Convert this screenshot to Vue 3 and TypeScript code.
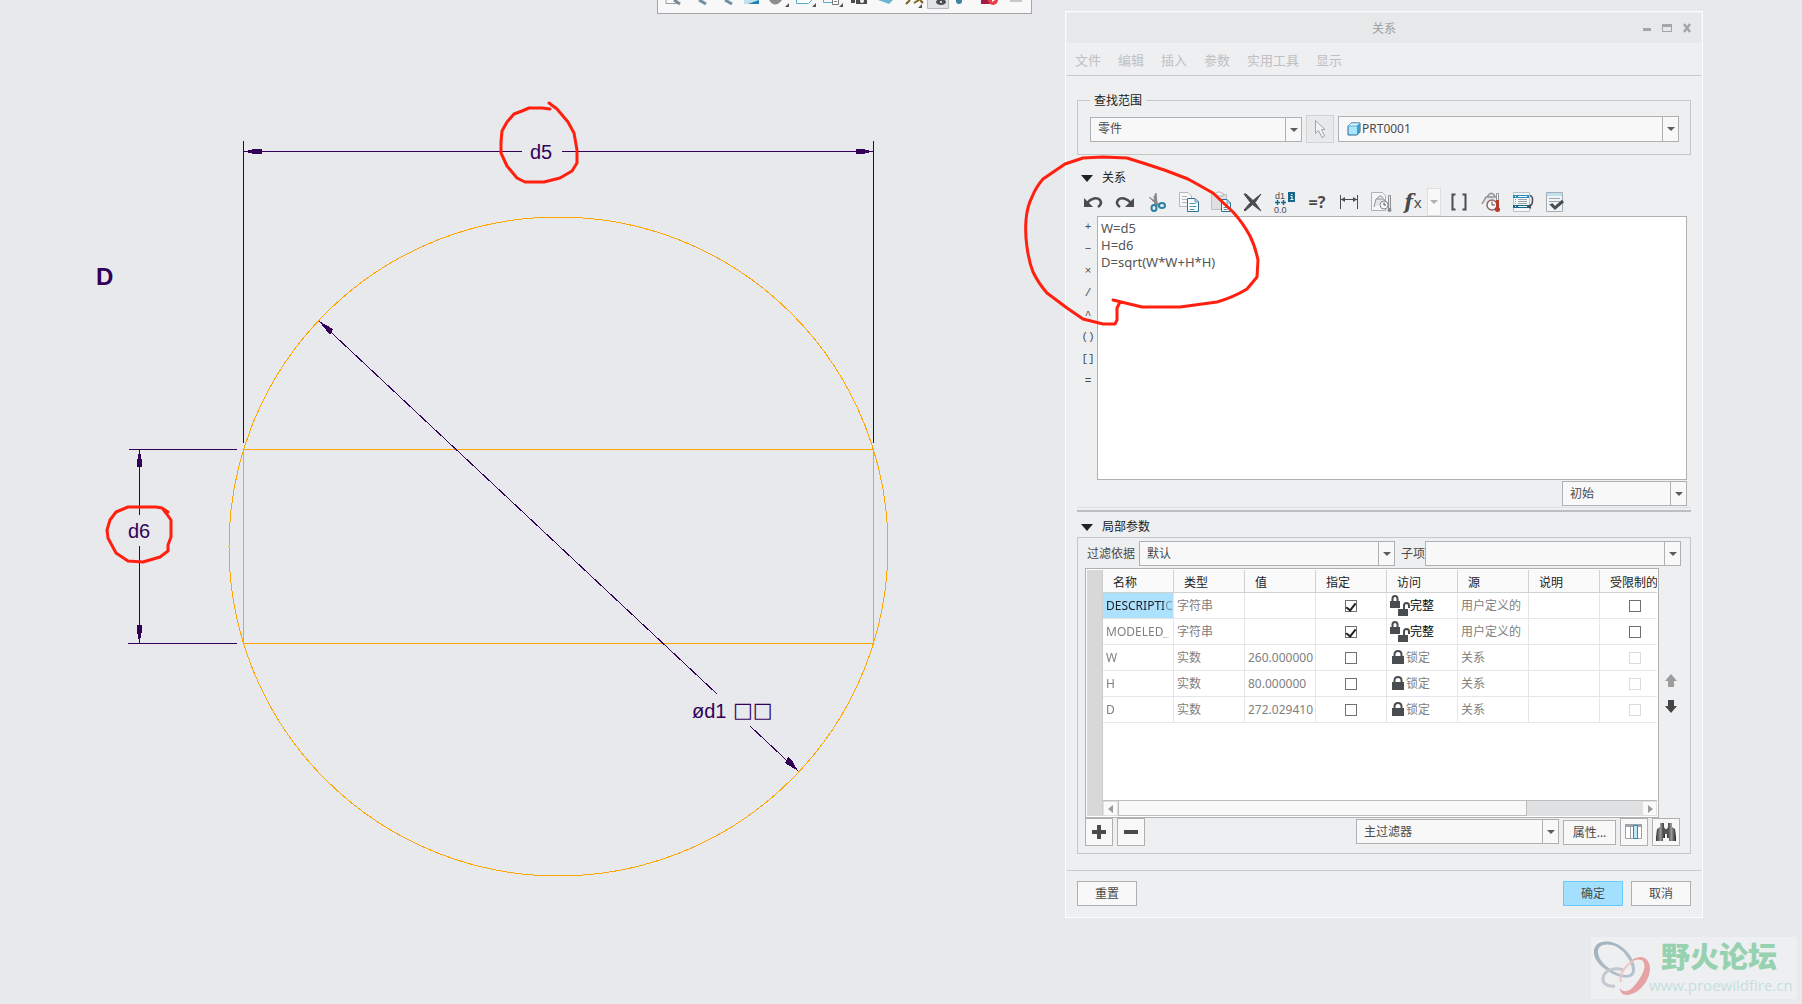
<script setup lang="ts">
import { reactive, ref } from 'vue'

interface Param {
  name: string
  type: string
  value: string
  designated: boolean
  full: boolean
  source: string
}

const menus = ['文件', '编辑', '插入', '参数', '实用工具', '显示']
const operators = ['+', '−', '×', '/', '^', '()', '[]', '=']
const headers = ['名称', '类型', '值', '指定', '访问', '源', '说明', '受限制的']

const relations = ref('W=d5\nH=d6\nD=sqrt(W*W+H*H)')

const params = reactive<Param[]>([
  { name: 'DESCRIPTIO', type: '字符串', value: '', designated: true, full: true, source: '用户定义的' },
  { name: 'MODELED_', type: '字符串', value: '', designated: true, full: true, source: '用户定义的' },
  { name: 'W', type: '实数', value: '260.000000', designated: false, full: false, source: '关系' },
  { name: 'H', type: '实数', value: '80.000000', designated: false, full: false, source: '关系' },
  { name: 'D', type: '实数', value: '272.029410', designated: false, full: false, source: '关系' },
])
const selected = ref(0)
</script>

<template>
  <main class="desktop">
    <!-- Sketch with its dimensions -->
    <svg class="sketch" role="img" aria-label="草绘">
      <g class="geometry" shape-rendering="crispEdges">
        <circle cx="558.5" cy="546.5" r="329.5" />
        <rect x="243.5" y="449.5" width="630" height="194" />
      </g>
      <g class="dimension" shape-rendering="crispEdges">
        <path d="M243.5 141V443M873.5 141V443M244 151.5H522M562 151.5H873" />
        <path d="M129 449.5H237M128 643.5H237M139.5 450V515M139.5 546V643" />
        <path d="M319 321L717 694M750 726L798 771" />
      </g>
      <g class="arrowhead" shape-rendering="crispEdges">
        <path d="M246 151L254 149H262V154H254L246 152z" />
        <path d="M871 151L863 149H856V154H863L871 152z" />
        <path d="M139 452L137 461V467H142V461L140 452z" />
        <path d="M139 641L137 631V625H142V631L140 641z" />
        <path d="M319 321L333 329L330 335L326 330z" />
        <path d="M798 771L785 763L788 757L793 762z" />
      </g>
      <text x="96" y="285" class="label-bold">D</text>
      <text x="530" y="159" class="label">d5</text>
      <text x="128" y="538" class="label">d6</text>
      <text x="692" y="718" class="label">ød1</text>
      <text x="733" y="717" class="boxes">□□</text>
    </svg>

    <!-- Graphics toolbar, docked at the upper edge -->
    <div class="graphics-bar">
      <svg width="374" height="13" aria-hidden="true">
        <g fill="none" stroke="#9a9fa3">
          <path d="M8 0V3.500H20" /><path d="M16 0l6 4" stroke-width="3" stroke="#7c8b96" />
          <path d="M41 0l7 4" stroke-width="3" stroke="#6f8fa3" />
          <path d="M67 0l7 4" stroke-width="3" stroke="#6f8fa3" />
        </g>
        <path d="M86 0H101V4H86z" fill="#bfe0ee" /><path d="M90 4L101 0V4z" fill="#1f7fae" />
        <path d="M111 0Q117 9 124 0z" fill="#8b8e90" />
        <path d="M138.500 0V3.500H150.500L154 0" fill="#fff" stroke="#58acd0" />
        <path d="M165.500 0V2.500H174" fill="none" stroke="#58acd0" /><path d="M174.500 0V4.500H180.500V0M176 1.500H179" fill="#fff" stroke="#777" />
        <path d="M193 0h4v3h-4zM198 0H209V4H198z" fill="#4a4d50" /><circle cx="204" cy="1" r="2" fill="#eee" />
        <path d="M220 0L231 4L235 0z" fill="#6fb4cf" />
        <path d="M248 4l4-4M256 3l5-3M262 0l3 3" stroke="#80601c" stroke-width="2" fill="none" />
        <path d="M269.500 0V8.500H290.500V0" fill="#e1e3e5" stroke="#b7babd" />
        <ellipse cx="283" cy="2" rx="5" ry="3" fill="#4a4d50" /><circle cx="283" cy="2" r="1" fill="#fff" />
        <circle cx="301" cy="1" r="3" fill="#3c83a6" />
        <path d="M323 0h9v4h-9z" fill="#a51c4b" /><circle cx="335" cy="0" r="5" fill="#e9404a" /><path d="M334 0v2l3-2z" fill="#fff" />
        <path d="M352 1h12" stroke="#c8c8c8" stroke-width="2" />
        <path d="M131 3v4h-4zM158 3v4h-4zM185 3v4h-4zM264 4v4h-4z" fill="#555" />
      </svg>
    </div>

    <section class="dialog" role="dialog" aria-label="关系">
      <header class="titlebar">
        <h1>关系</h1>
        <div class="window-buttons">
          <button aria-label="最小化"><svg width="10" height="10"><path d="M1 5h8v3H1z" fill="#a3a5a6" /></svg></button>
          <button aria-label="最大化"><svg width="10" height="10"><path d="M0 1h10v8H0zM1 4v4h8V4z" fill="#a3a5a6" fill-rule="evenodd" /></svg></button>
          <button aria-label="关闭"><svg width="10" height="10"><path d="M2 1l6 8M8 1L2 9" stroke="#a3a5a6" stroke-width="2.500" /></svg></button>
        </div>
      </header>

      <nav class="menubar">
        <button v-for="m in menus" :key="m">{{ m }}</button>
      </nav>

      <div class="content">
        <fieldset class="scope">
          <legend>查找范围</legend>
          <div class="scope-row">
            <div class="combo scope-kind">
              <select aria-label="对象类型"><option>零件</option></select>
            </div>
            <button class="pick" aria-label="选择">
              <svg width="12" height="20" fill="#f2f3f4" stroke="#a3a5a7"><path d="M1.500 1.500V14.500L4.500 11.500L8 18.500L10.500 17L7.500 10.500H11z" /></svg>
            </button>
            <div class="combo tall scope-object">
              <svg class="cube" width="14" height="14">
                <path d="M1 4L4 1H13V10L10 13H1z" fill="#a8e6fb" stroke="#286a92" />
                <path d="M10 4L13 1V10L10 13z" fill="#3d9fd0" /><path d="M1 4L4 1H13L10 4z" fill="#e2f7ff" stroke="#5ea8cc" />
              </svg>
              <select aria-label="对象"><option>PRT0001</option></select>
            </div>
          </div>
        </fieldset>

        <h2 class="section-title relation-title"><span class="triangle"></span>关系</h2>

        <div class="toolbar" role="toolbar">
          <button aria-label="撤消"><svg viewBox="0 0 24 24"><path d="M3 8v9h9z" fill="#4a4d50" /><path d="M6 13C10 8 16 7 19 10C21 13 20 15 17 17" class="ink" stroke-width="2.500" /></svg></button>
          <button aria-label="重做"><svg viewBox="0 0 24 24"><path d="M21 8v9h-9z" fill="#4a4d50" /><path d="M18 13C14 8 8 7 5 10C3 13 4 15 7 17" class="ink" stroke-width="2.500" /></svg></button>
          <button aria-label="剪切"><svg viewBox="0 0 24 24"><path d="M4 7L15 15L13 16zM11 3L12 13L10 15L9 7z" fill="#85898c" stroke="#85898c" /><ellipse cx="9" cy="18" rx="2.500" ry="3" class="teal" stroke-width="2" /><ellipse cx="17" cy="15.500" rx="3" ry="2.500" class="teal" stroke-width="2" /></svg></button>
          <button aria-label="复制"><svg viewBox="0 0 24 24"><path d="M2.500 2.500H11L14.500 6V16.500H2.500z" fill="#f7f7f7" stroke="#b5b8ba" /><path d="M5 6.500h5M5 9.500h6M5 12.500h5" stroke="#b5b8ba" /><path d="M10.500 8.500H18L21.500 12V21.500H10.500z" fill="#fff" stroke="#2b6f93" /><path d="M18 8.500V12H21.500M12.500 13.500h6M12.500 16.500h7M12.500 19.500h5" fill="none" stroke="#4d91b3" /></svg></button>
          <button aria-label="粘贴"><svg viewBox="0 0 24 24"><path d="M2.500 4.500H17.500V19.500H2.500z" fill="#dedfe0" stroke="#bfc1c3" /><path d="M6 6V3.500L9 2H11L14 3.500V6z" fill="#f4f4f4" stroke="#b3b5b7" /><path d="M12.500 9.500H18L21.500 13V21.500H12.500z" fill="#fff" stroke="#2b6f93" /><path d="M18 9.500V13H21.500M14.500 14.500h4M14.500 17.500h5M14.500 19.500h4" fill="none" stroke="#4d91b3" /></svg></button>
          <button aria-label="删除"><svg viewBox="0 0 24 24"><path d="M3 4L5 4L12 10.500L20 4L14 12.500L20 21L11.500 14.500L4 21L3 20L9.500 12.500z" fill="#4a4d50" stroke="#4a4d50" /></svg></button>
          <button aria-label="切换尺寸"><svg viewBox="0 0 24 24"><text x="2" y="9" class="tiny">d1</text><text x="1" y="23" class="tiny">0.0</text><path d="M2 12.500H7M4.500 10V15M8 12.500h5M10.500 10V15" stroke="#16678c" stroke-width="1.500" /><rect x="15" y="2" width="7" height="10" fill="#16678c" /><path d="M18 4h1.500v1H18zM17.500 6h2v3h1v1h-3V9h1V7h-1z" fill="#fff" /></svg></button>
          <button class="glyph eval" aria-label="计算">=?</button>
          <button aria-label="显示尺寸"><svg viewBox="0 0 24 24"><path d="M3.500 5V19M20.500 5V19M4 9.500H20" class="ink" /><path d="M4 9.500L8 7V12zM20 9.500L16 7V12z" fill="#4a4d50" /></svg></button>
          <button aria-label="单位"><svg viewBox="0 0 24 24"><path d="M2.500 2.500H13.500L16.500 5.500V20.500H2.500z" fill="#f6f6f6" stroke="#aeb1b3" /><path d="M5 17L7 9H15L16 13M8 9Q11 3 14 8" fill="#e4e5e6" stroke="#909396" /><circle cx="15" cy="15" r="4" fill="#fafafa" stroke="#85898c" /><path d="M15 12.500V15H17" class="ink" stroke="#777" /><path d="M19.500 5.500h2V19h-2z" fill="#e4e5e6" stroke="#909396" /><circle cx="20.500" cy="20" r="2" fill="#85898c" /></svg></button>
          <button class="glyph fx" aria-label="函数"><i>f</i>x</button>
          <button class="fx-drop" aria-label="函数列表"></button>
          <button class="glyph" aria-label="括号"><svg viewBox="0 0 24 24"><path d="M8.500 4.500H5.500V19.500H8.500M15.500 4.500H18.500V19.500H15.500" class="ink" stroke-width="2" /></svg></button>
          <button aria-label="检查单位"><svg viewBox="-2 0 24 24"><path d="M1 14L5 7H17M6 7Q10 0 14 6" fill="#e4e5e6" stroke="#909396" stroke-width="1.500" /><circle cx="11" cy="15" r="5" fill="#fafafa" stroke="#8a6a60" stroke-width="1.500" /><path d="M11 11.500V15H14" class="ink" /><path d="M15.500 3.500h2V19h-2z" fill="#fff" stroke="#909396" /><path d="M15 10h3v9h-3z" fill="#b83a2c" /><circle cx="16.500" cy="19.500" r="2.500" fill="#b83a2c" /></svg></button>
          <button aria-label="排序"><svg viewBox="-1 0 24 24"><path d="M1.500 2.500H17.500V21.500H1.500z" fill="#f2f7fa" stroke="#b5c2ca" /><path d="M1 5h16v3H1z" fill="#2a8cbb" /><path d="M1 15h16v3H1z" fill="#16678c" /><path d="M3 6.500h1M6 6.500h9M3 16.500h1M6 16.500h9" stroke="#fff" /><path d="M3 9.500h1M6 9.500h9M3 11.500h1M6 11.500h9M3 13.500h1M6 13.500h9" stroke="#9aa3a8" /><path d="M18 5.500Q21 6 20.500 11Q20.500 15 17 16.500" class="ink" stroke-width="1.500" /><path d="M15 16.500l4-2.500v5z" fill="#4a4d50" /></svg></button>
          <button aria-label="校验"><svg viewBox="-1 0 24 24"><path d="M2.500 2.500H18.500V21.500H2.500z" fill="#eef4f8" stroke="#a3adb3" /><path d="M3 3h15v3H3z" fill="#c4dff0" /><path d="M5 8.500h11M5 11.500h11M5 14.500h5" stroke="#a0a5a8" /><path d="M7 14L11 18L19 11" class="ink" stroke-width="3" /></svg></button>
        </div>

        <div class="editor">
          <div class="operators">
            <button v-for="o in operators" :key="o">{{ o }}</button>
          </div>
          <textarea v-model="relations" aria-label="关系" spellcheck="false"></textarea>
        </div>
        <div class="state-row">
          <div class="combo state">
            <select aria-label="计算时机"><option>初始</option></select>
          </div>
        </div>

        <div class="splitter"></div>

        <h2 class="section-title param-title"><span class="triangle"></span>局部参数</h2>

        <div class="param-panel">
          <div class="filter-row">
            <label for="filter-by">过滤依据</label>
            <div class="combo filter-combo"><select id="filter-by"><option>默认</option></select></div>
            <label for="sub-item" class="sub-label">子项</label>
            <div class="combo filter-combo"><select id="sub-item"><option></option></select></div>
          </div>

          <div class="table-row">
            <div class="table-box">
              <div class="gutter"></div>
              <div class="table-main">
                <div class="table-clip">
                  <table>
                    <thead>
                      <tr><th v-for="h in headers" :key="h" scope="col">{{ h }}</th></tr>
                    </thead>
                    <tbody>
                      <tr v-for="(p, i) in params" :key="p.name">
                        <td :class="{ selected: i === selected }" @click="selected = i"><span class="clip">{{ p.name }}</span></td>
                        <td>{{ p.type }}</td>
                        <td>{{ p.value }}</td>
                        <td class="check"><input v-model="p.designated" type="checkbox" :aria-label="`指定 ${p.name}`" /></td>
                        <td class="access" :class="{ full: p.full }">
                          <span class="access-inner">
                            <svg v-if="p.full" width="20" height="22">
                              <path d="M0 6h10v7H0z" fill="#4a4d50" /><path d="M2.500 7V3.500Q2.500 1 5 1T7.500 3.500V7" class="ink" stroke-width="2" />
                              <path d="M8 14h10v7H8z" fill="#4a4d50" /><path d="M14 14V10.500Q14 8 16.500 8T19 10.500V13" class="ink" stroke-width="2" />
                            </svg>
                            <svg v-else width="16" height="22">
                              <path d="M2 9h12v8H2z" fill="#4a4d50" /><path d="M4.500 10V7.500Q4.500 4 8 4T11.500 7.500V10" class="ink" stroke-width="2" />
                            </svg>{{ p.full ? '完整' : '锁定' }}
                          </span>
                        </td>
                        <td>{{ p.source }}</td>
                        <td></td>
                        <td class="check"><input type="checkbox" :disabled="!p.full" :aria-label="`受限制的 ${p.name}`" /></td>
                      </tr>
                    </tbody>
                  </table>
                </div>
                <div class="scrollbar">
                  <button aria-label="向左滚动"><svg width="6" height="8"><path d="M5 0v8L0 4z" fill="#9a9a9a" /></svg></button>
                  <div class="track"><div class="thumb"></div></div>
                  <button aria-label="向右滚动"><svg width="6" height="8"><path d="M1 0v8l5-4z" fill="#9a9a9a" /></svg></button>
                </div>
              </div>
            </div>
            <div class="movers">
              <button aria-label="上移"><svg width="12" height="14"><path d="M6 0l6 7H9v6H3V7H0z" fill="#9c9c9c" /></svg></button>
              <button aria-label="下移"><svg width="12" height="14"><path d="M6 14l6-7H9V1H3v6H0z" fill="#444" /></svg></button>
            </div>
          </div>

          <div class="param-actions">
            <button class="square" aria-label="添加"><svg width="14" height="14"><path d="M5 0h4v5h5v4H9v5H5V9H0V5h5z" fill="#4a4a4a" /></svg></button>
            <button class="square" aria-label="移除"><svg width="14" height="14"><path d="M0 5h14v4H0z" fill="#4a4a4a" /></svg></button>
            <div class="combo main-filter"><select aria-label="过滤器"><option>主过滤器</option></select></div>
            <button class="push props">属性...</button>
            <button class="square" aria-label="列"><svg width="18" height="16"><path d="M.5 1.500h16v13H.5zM5.500 2v12M12.500 2v12" fill="#fff" stroke="#a0a3a5" /><path d="M0 0h17v3H0z" fill="#a0a3a5" /><path d="M8.500 1.500h4v13h-4z" fill="#bfe8f8" stroke="#1b8fbe" /></svg></button>
            <button class="square" aria-label="查找"><svg width="20" height="18">
              <defs><linearGradient id="barrel"><stop offset="0" stop-color="#333" /><stop offset=".5" stop-color="#999" /><stop offset="1" stop-color="#222" /></linearGradient></defs>
              <path d="M4 0h4v4l1 2v9H7v3H0v-4L1 6L4 4z" fill="url(#barrel)" /><path d="M12 0h4v4l3 2l1 8v4h-7v-3h-2V6l1-2z" fill="url(#barrel)" /><path d="M8 6h4v5H8z" fill="#555" />
            </svg></button>
          </div>
        </div>
      </div>

      <footer class="footer">
        <button class="push">重置</button>
        <span class="spacer"></span>
        <button class="push primary">确定</button>
        <button class="push">取消</button>
      </footer>
    </section>

    <!-- Hand-drawn marks over the sketch and the dialog -->
    <svg class="marks" aria-hidden="true">
      <path d="M550 109L542 108H529L522 111L514 114L507 122L502 131L501 142V153L507 166L517 178L525 182H544L560 178L572 171L577 163V150L574 133L568 122L557 109L549 103" />
      <path d="M168 512L162 508L156 507H128L116 512L110 520L107 530L108 538L116 553L128 561L143 562L160 557L168 551V545L171 537V520L166 513L163 509" />
      <path d="M1113 300L1142 307H1180L1217 302Q1234 297 1247 289L1257 277L1258 260Q1255 246 1250 236Q1243 223 1233 212L1213 193L1188 179Q1166 170 1143 163L1127 158L1103 157L1083 158L1065 164L1043 179Q1036 187 1032 197Q1027 207 1026 220Q1025 234 1027 247Q1029 262 1033 272Q1039 284 1047 293L1067 308L1083 319L1103 324H1115L1117 320V308L1120 302" />
    </svg>

    <aside class="watermark">
      <svg width="58" height="58" viewBox="0 0 58 58" fill="none">
        <defs><linearGradient id="steel" x1="0" y1="0" x2="1" y2="1"><stop offset="0" stop-color="#9fb0bd" /><stop offset="1" stop-color="#b8c3ce" /></linearGradient></defs>
        <path fill-rule="evenodd" fill="url(#steel)" d="M1 14C0 4 8 0 18 2C32 5 43 20 42 31C41 40 29 39 18 33C8 27 2 21 1 14zM5 13C6 20 12 26 20 31C30 36 39 37 39 30C39 21 30 8 19 5C10 3 4 6 5 13z" />
        <path d="M30 30C22 27 11 30 10 38C9 43 14 47 22 46" stroke="#c3c8d1" stroke-width="3" />
        <path fill="#e7a2a6" d="M36 23C44 14 56 15 57 28C57 41 46 54 34 55C29 55 27 52 27 48C30 53 36 52 41 46C48 38 53 29 51 23C49 18 42 19 36 23z" />
        <path d="M28 42C26 34 32 26 40 21" stroke="#efc4c6" stroke-width="2" />
      </svg>
      <div class="watermark-text">
        <strong>野火论坛</strong>
        <span>www.proewildfire.cn</span>
      </div>
    </aside>
  </main>
</template>

<style>
body {
  background: #e8e9ed;
}
</style>

<style scoped>
.desktop {
  position: relative;
  min-height: 100vh;
  overflow: hidden;
  background: #e8e9ed;
  font: 12px/16px "Noto Sans", "Noto Sans CJK SC", sans-serif;
  color: #4a4a4a;
}
.desktop * {
  box-sizing: border-box;
}
button,
select,
textarea,
input {
  margin: 0;
  padding: 0;
  border: 0;
  border-radius: 0;
  background: none;
  font: inherit;
  color: inherit;
}
svg {
  display: block;
}
.ink {
  fill: none;
  stroke: #4a4d50;
}
.teal {
  fill: none;
  stroke: #2b7fa3;
}

/* sketch */
.sketch,
.marks {
  position: absolute;
  inset: 0;
  width: 100%;
  height: 100%;
}
.geometry {
  fill: none;
  stroke: #ffa500;
}
.dimension {
  fill: none;
  stroke: #330058;
}
.arrowhead,
.sketch text {
  fill: #330058;
}
.label {
  font: 20px "Liberation Sans", sans-serif;
}
.label-bold {
  font: bold 24px "Liberation Sans", sans-serif;
}
.boxes {
  font: 21px "DejaVu Sans", sans-serif;
}
.marks {
  pointer-events: none;
  fill: none;
  stroke: #ff2010;
  stroke-width: 3;
  stroke-linejoin: round;
  stroke-linecap: round;
}

.graphics-bar {
  position: absolute;
  left: 657px;
  top: 0;
  width: 375px;
  height: 14px;
  border: 1px solid #a5a6a8;
  border-top: 0;
  background: #f8f8f8;
}

/* dialog */
.dialog {
  position: absolute;
  left: 1065px;
  top: 11px;
  width: 638px;
  padding: 1px;
  border: 1px solid #fcfcfd;
  background: #eeeff1;
}
.titlebar {
  position: relative;
  display: flex;
  align-items: center;
  justify-content: center;
  height: 30px;
  background: #e6e8e9;
  color: #9c9ea0;
}
h1,
h2 {
  margin: 0;
  font: inherit;
}
.titlebar h1 {
  padding-top: 2px;
}
.window-buttons {
  position: absolute;
  right: 9px;
  display: flex;
  gap: 10px;
}
.menubar {
  display: flex;
  align-items: center;
  gap: 17px;
  height: 33px;
  padding: 1px 8px 0;
  border-bottom: 1px solid #c8c9cb;
  font-size: 13px;
  color: #bfc0c2;
}
.content {
  padding: 0 10px;
}
.scope {
  margin: 15px 0 0;
  padding: 6px 11px 11px 12px;
  border: 1px solid #c5c6c8;
}
.scope legend {
  padding: 2px 4px 0;
  line-height: 16px;
  color: #222;
}
.scope-row {
  display: flex;
  align-items: center;
  gap: 4px;
}
.combo {
  position: relative;
  display: flex;
  align-items: center;
  height: 25px;
  border: 1px solid #aeb0b2;
  background: #f8f8f8;
}
.combo.tall {
  height: 26px;
}
.combo::after {
  content: "";
  position: absolute;
  right: 0;
  top: 0;
  width: 15px;
  height: 100%;
  border-left: 1px solid #aeb0b2;
  pointer-events: none;
}
.combo::before {
  content: "";
  position: absolute;
  right: 3px;
  top: 10px;
  border: 4px solid transparent;
  border-top-color: #5c5c5c;
  border-bottom: 0;
  pointer-events: none;
}
.combo select {
  flex: 1;
  min-width: 0;
  height: 100%;
  padding: 0 16px 0 7px;
  appearance: none;
}
.scope-kind {
  width: 212px;
}
.pick {
  display: grid;
  place-items: center;
  width: 28px;
  height: 28px;
  border: 1px solid #d0d2d4;
  background: #e8e9eb;
}
.scope-object {
  flex: 1;
}
.cube {
  margin-left: 8px;
}
.scope-object select {
  padding-left: 1px;
}
.section-title {
  display: flex;
  align-items: center;
  gap: 9px;
  height: 16px;
  padding-left: 4px;
  color: #222;
}
.relation-title {
  margin: 15px 0 2px;
}
.param-title {
  margin: 7px 0 2px;
}
.triangle {
  border: 6px solid transparent;
  border-top: 7px solid #222;
  border-bottom: 0;
}
.toolbar {
  display: flex;
  height: 28px;
}
.toolbar button {
  display: grid;
  place-items: center;
  width: 32px;
}
.toolbar svg {
  width: 24px;
  height: 24px;
}
.tiny {
  font: 9px "Liberation Sans", sans-serif;
  fill: #4a4d50;
}
.toolbar .eval {
  font-weight: bold;
  font-size: 16px;
}
.toolbar .fx {
  display: flex;
  align-items: center;
  justify-content: center;
  gap: 1px;
  font-size: 15px;
}
.fx i {
  font: italic bold 20px "DejaVu Serif", serif;
}
.toolbar .fx-drop {
  width: 14px;
  margin: 0 2px 0 -2px;
  border: 1px solid #dcdee0;
  background: #f8f8f8;
}
.fx-drop::after {
  content: "";
  border: 4px solid transparent;
  border-top-color: #b0b0b0;
  border-bottom: 0;
}
.editor {
  display: flex;
  height: 264px;
}
.operators {
  display: flex;
  flex-direction: column;
  width: 20px;
}
.operators button {
  height: 22px;
  padding-left: 2px;
  font: 11px "Liberation Mono", monospace;
}
.editor textarea {
  flex: 1;
  margin-right: 4px;
  padding: 3px;
  border: 1px solid #aeb0b2;
  background: #fff;
  font-size: 13px;
  line-height: 17px;
  color: #555;
  resize: none;
  outline: 0;
}
.state-row {
  display: flex;
  justify-content: flex-end;
  margin: 1px 4px 1px 0;
}
.state {
  width: 125px;
}
.splitter {
  height: 5px;
  border-top: 1px solid #dbe3e9;
  border-bottom: 2px solid #bcbec1;
}
.param-panel {
  padding: 3px 0 7px;
  border: 1px solid #c5c6c8;
}
.filter-row {
  display: flex;
  align-items: center;
  padding: 0 9px;
}
.filter-row label {
  flex: none;
}
.filter-combo {
  flex: 1;
}
.filter-row label:first-child {
  margin-right: 4px;
}
.filter-row .sub-label {
  margin-left: 6px;
}
.table-row {
  display: flex;
  margin-top: 2px;
  padding: 0 7px;
}
.table-box {
  display: flex;
  flex: 1;
  min-width: 0;
  height: 250px;
  padding: 1px;
  border: 1px solid #aeb0b2;
  background: #fff;
}
.gutter {
  flex: none;
  width: 16px;
  border-right: 1px solid #cdcdcd;
  background: #d8d8d8;
}
.table-main {
  display: flex;
  flex: 1;
  flex-direction: column;
  min-width: 0;
}
.table-clip {
  flex: 1;
  overflow: hidden;
}
table {
  width: 568px;
  table-layout: fixed;
  border-collapse: separate;
  border-spacing: 0;
}
th,
td {
  overflow: hidden;
  height: 26px;
  padding: 0 0 0 3px;
  border-right: 1px solid #e4e6e9;
  border-bottom: 1px solid #e4e6e9;
  text-align: left;
  white-space: nowrap;
  font-weight: normal;
  color: #808080;
}
th {
  height: 23px;
  padding: 3px 0 0 10px;
  border-color: #cfd1d3;
  background: #fafafa;
  color: #222;
}
.clip {
  display: block;
  width: 66px;
  overflow: hidden;
  mask-image: linear-gradient(90deg, #000 86%, #0006 90%);
}
td.selected {
  background: #ade2ff;
  color: #222;
}
td.check {
  padding: 0;
  text-align: center;
}
.check input {
  display: inline-grid;
  place-items: center;
  width: 12px;
  height: 12px;
  border: 1px solid #707070;
  background: #fff;
  appearance: none;
  vertical-align: middle;
}
.check input:checked::after {
  content: "";
  width: 4px;
  height: 8px;
  border: solid #222;
  border-width: 0 2px 2px 0;
  rotate: 38deg;
}
.check input:disabled {
  border-color: #dcdcdc;
}
td.full {
  color: #000;
}
.access-inner {
  display: flex;
  align-items: center;
}
.scrollbar {
  display: flex;
  height: 16px;
  border-top: 1px solid #bbbdbf;
}
.scrollbar button {
  display: grid;
  place-items: center;
  width: 15px;
  border: 1px solid #e0e0e0;
  background: #fafafa;
}
.track {
  flex: 1;
  background: #dfe0e1;
}
.thumb {
  width: 78%;
  height: 100%;
  border: 1px solid #bbbdbf;
  border-top: 0;
  background: #f8f8f8;
}
.movers {
  display: flex;
  flex-direction: column;
  width: 24px;
  padding-top: 100px;
}
.movers button {
  display: grid;
  place-items: center;
  height: 25px;
}
.param-actions {
  display: flex;
  padding: 0 10px 0 7px;
  gap: 4px;
}
.square {
  display: grid;
  place-items: center;
  width: 28px;
  height: 28px;
  border: 1px solid #aeb0b2;
  background: #f8f8f8;
}
.main-filter {
  width: 203px;
  margin: 1px 0 0 auto;
}
.push {
  width: 60px;
  height: 25px;
  border: 1px solid #aeb0b2;
  background: #f8f8f8;
}
.push.props {
  width: 53px;
  margin-top: 2px;
}
.primary {
  border-color: #66ccff;
  background: #a3e0ff;
}
.footer {
  display: flex;
  gap: 8px;
  margin-top: 16px;
  padding: 10px;
  border-top: 1px solid #c8c9cb;
}
.spacer {
  flex: 1;
}

.watermark {
  position: absolute;
  right: 5px;
  bottom: 5px;
  display: flex;
  width: 206px;
  height: 62px;
  padding: 3px 2px;
  background: #eeeff1;
}
.watermark-text {
  display: flex;
  flex-direction: column;
  margin-left: -2px;
  font-family: "Open Sans", "Noto Sans CJK SC", sans-serif;
  color: #c4e0df;
}
.watermark strong {
  padding-left: 12px;
  font-size: 29px;
  line-height: 34px;
  font-weight: 900;
  color: #97d2b0;
}
.watermark span {
  font-size: 15px;
  line-height: 22px;
}
</style>
